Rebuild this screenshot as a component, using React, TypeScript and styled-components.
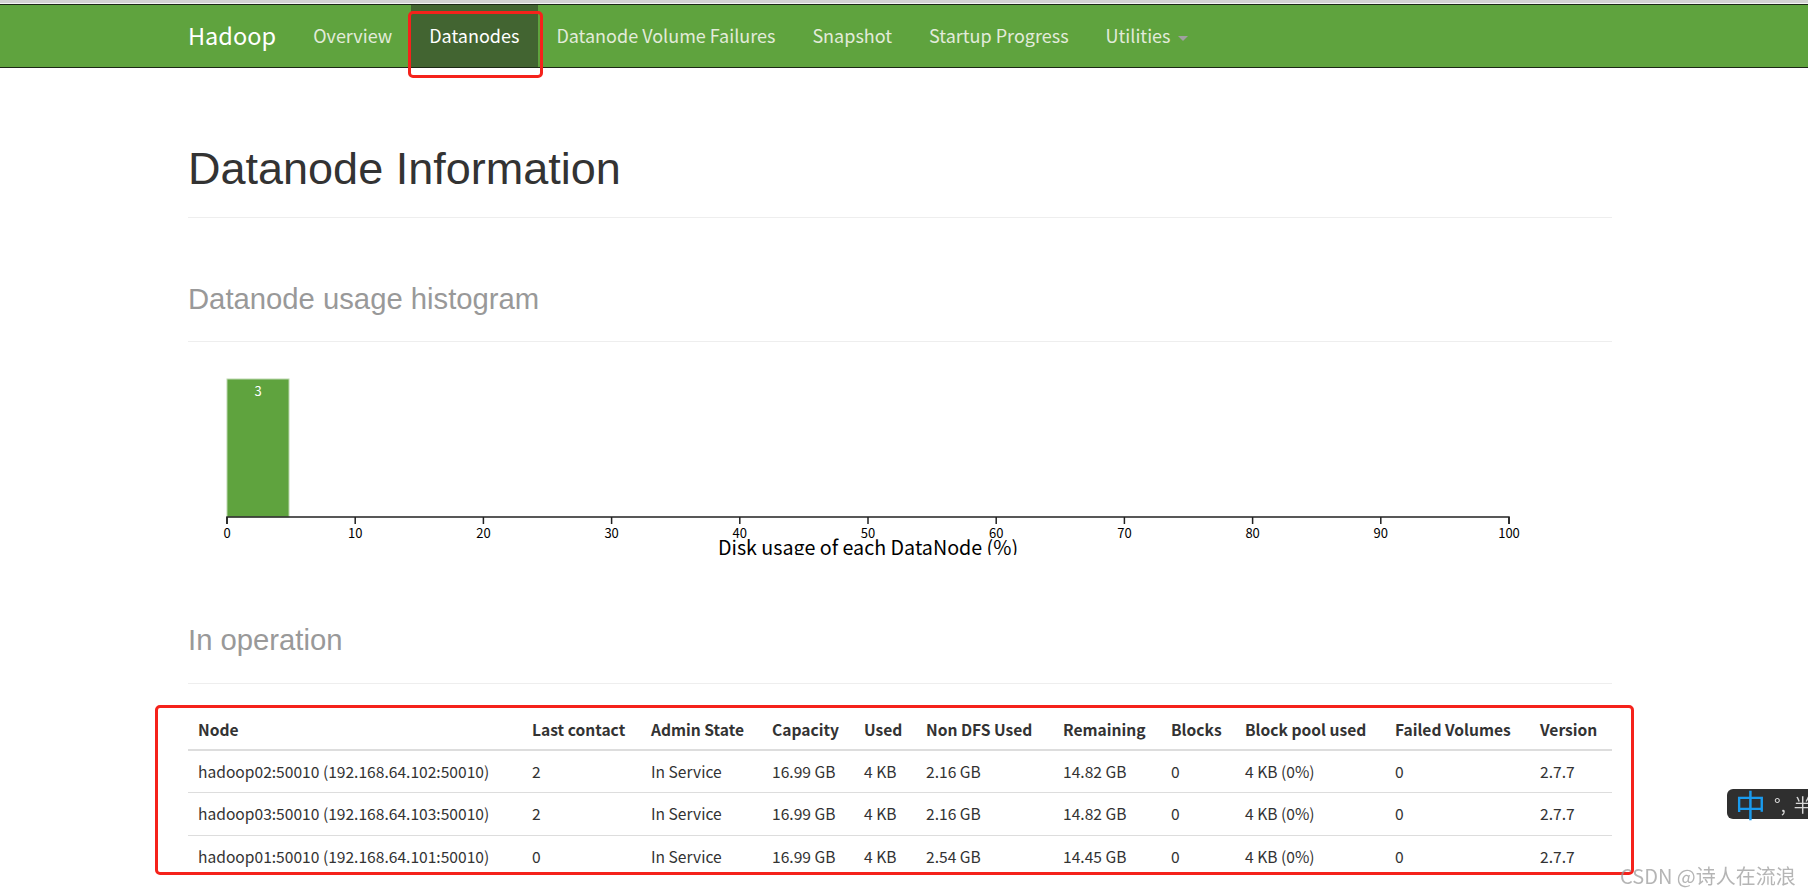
import React from "react";
import styled, { createGlobalStyle } from "styled-components";

const GlobalStyle = createGlobalStyle`
  html, body {
    margin: 0;
    padding: 0;
    overflow: hidden;
    background: #fff;
  }
  body {
    font-family: "Noto Sans CJK SC", "Noto Sans", sans-serif;
    color: #333;
  }
`;

const Page = styled.div`
  position: relative;
  width: 1808px;
  height: 893px;
  overflow: hidden;
`;

const TopStrip = styled.div`
  height: 3px;
  background: #d2d2d2;
  border-bottom: 1px solid #f4f4f4;
`;

const Navbar = styled.nav`
  height: 62px;
  background: #5fa33e;
  border-top: 1px solid #1c2816;
  border-bottom: 1px solid #1c2816;
`;

const Container = styled.div`
  width: 1424px;
  margin-left: 188px;
`;

const NavRow = styled.ul`
  display: flex;
  height: 62px;
  margin: 0;
  padding: 0;
  list-style: none;
`;

const Brand = styled.li`
  padding-right: 18.75px;
  line-height: 61px;
  font-size: 23.5px;
  color: #fff;
`;

const NavItem = styled.li<{ $active?: boolean }>`
  position: relative;
  padding: 0 18.5px;
  line-height: 61px;
  font-size: 18px;
  color: ${(p) => (p.$active ? "#fff" : "#e2ebda")};
  background: ${(p) => (p.$active ? "#426431" : "transparent")};
`;

const Caret = styled.span`
  display: inline-block;
  width: 0;
  height: 0;
  margin-left: 7px;
  vertical-align: middle;
  border-top: 5px solid #a0a0a0;
  border-left: 5px solid transparent;
  border-right: 5px solid transparent;
`;

const Marker = styled.span<{ $t: number; $r: number; $b: number; $l: number }>`
  position: absolute;
  top: ${(p) => p.$t}px;
  right: ${(p) => p.$r}px;
  bottom: ${(p) => p.$b}px;
  left: ${(p) => p.$l}px;
  border: 3px solid #f5221b;
  border-radius: 5px;
  pointer-events: none;
  z-index: 5;
`;

const PageHeader = styled.div<{ $top: number; $pad: number }>`
  margin-top: ${(p) => p.$top}px;
  padding-bottom: ${(p) => p.$pad}px;
  border-bottom: 1px solid #eee;
`;

const Title = styled.h1`
  margin: 0;
  font-family: "Liberation Sans", Arial, sans-serif;
  font-weight: 400;
  font-size: 45px;
  line-height: 49.5px;
  color: #333;
`;

const SubTitle = styled.h1`
  margin: 0;
  font-family: "Liberation Sans", Arial, sans-serif;
  font-weight: 400;
  font-size: 29.25px;
  line-height: 32.2px;
  color: #999;
`;

const Chart = styled.svg`
  display: block;
  margin-top: 25px;
  font-family: "Noto Sans CJK SC", "Noto Sans", sans-serif;
`;

const TableWrap = styled.div`
  position: relative;
  margin-top: 25px;
`;

const Table = styled.table`
  width: 1424px;
  table-layout: fixed;
  border-collapse: collapse;
  font-size: 15.6px;
  color: #333;
`;

const Th = styled.th`
  padding: 10px;
  line-height: 20px;
  text-align: left;
  font-weight: 700;
  white-space: nowrap;
  border-bottom: 2.5px solid #ddd;
`;

const Td = styled.td`
  padding: 10px;
  line-height: 21.5px;
  white-space: nowrap;
  border-top: 1.25px solid #ddd;
`;

const Ime = styled.div`
  position: fixed;
  left: 1727px;
  top: 789px;
  width: 110px;
  height: 30px;
  display: flex;
  align-items: center;
  gap: 8px;
  padding-left: 8px;
  box-sizing: border-box;
  background: #2f2f2f;
  border-radius: 6px;
  font-family: "Noto Sans CJK SC", sans-serif;
  color: #d8d8d8;
  z-index: 6;
`;

const ImeMain = styled.span`
  font-size: 31px;
  line-height: 30px;
  color: #1a9bee;
`;

const ImeSym = styled.span`
  font-size: 18px;
  line-height: 30px;
`;

const Watermark = styled.div`
  position: fixed;
  left: 1620px;
  top: 861px;
  font-family: "Noto Sans CJK SC", sans-serif;
  font-size: 20px;
  color: rgba(150, 150, 150, 0.7);
  z-index: 6;
`;

const navItems = [
  "Overview",
  "Datanodes",
  "Datanode Volume Failures",
  "Snapshot",
  "Startup Progress",
];

const columns: [string, number][] = [
  ["Node", 334],
  ["Last contact", 119],
  ["Admin State", 121],
  ["Capacity", 92],
  ["Used", 62],
  ["Non DFS Used", 137],
  ["Remaining", 108],
  ["Blocks", 74],
  ["Block pool used", 150],
  ["Failed Volumes", 145],
  ["Version", 82],
];

const rows = [
  ["hadoop02:50010 (192.168.64.102:50010)", "2", "In Service", "16.99 GB", "4 KB", "2.16 GB", "14.82 GB", "0", "4 KB (0%)", "0", "2.7.7"],
  ["hadoop03:50010 (192.168.64.103:50010)", "2", "In Service", "16.99 GB", "4 KB", "2.16 GB", "14.82 GB", "0", "4 KB (0%)", "0", "2.7.7"],
  ["hadoop01:50010 (192.168.64.101:50010)", "0", "In Service", "16.99 GB", "4 KB", "2.54 GB", "14.45 GB", "0", "4 KB (0%)", "0", "2.7.7"],
];

// histogram geometry (px inside the svg)
const X0 = 39;
const UNIT = 12.82;
const AXIS_Y = 150;
const ticks = [0, 10, 20, 30, 40, 50, 60, 70, 80, 90, 100];

const Histogram = () => (
  <Chart width={1424} height={188}>
    <rect x={X0} y={12} width={62} height={AXIS_Y - 12} fill="#5fa33e" stroke="#bcd7ad" strokeWidth={1} />
    <text x={X0 + 31} y={28.5} fill="#fff" fontSize={13} textAnchor="middle">3</text>
    <path
      d={`M${X0},${AXIS_Y + 7}V${AXIS_Y}H${X0 + UNIT * 100}V${AXIS_Y + 7}`}
      fill="none"
      stroke="#222"
      strokeWidth={1.5}
    />
    {ticks.map((t) => (
      <g key={t}>
        <line x1={X0 + UNIT * t} x2={X0 + UNIT * t} y1={AXIS_Y} y2={AXIS_Y + 7} stroke="#222" strokeWidth={1.5} />
        <text x={X0 + UNIT * t} y={170.5} fontSize={13} textAnchor="middle" fill="#000">
          {t}
        </text>
      </g>
    ))}
    <text x={X0 + UNIT * 50} y={187.5} fontSize={19.7} textAnchor="middle" fill="#000">
      Disk usage of each DataNode (%)
    </text>
  </Chart>
);

export default function App() {
  return (
    <Page>
      <GlobalStyle />
      <TopStrip />
      <Navbar>
        <Container>
          <NavRow>
            <Brand>Hadoop</Brand>
            {navItems.map((n) => (
              <NavItem key={n} $active={n === "Datanodes"}>
                {n}
                {n === "Datanodes" && <Marker $t={6} $r={-5} $b={-11} $l={-3} />}
              </NavItem>
            ))}
            <NavItem>
              Utilities
              <Caret />
            </NavItem>
          </NavRow>
        </Container>
      </Navbar>

      <Container>
        <PageHeader $top={76} $pad={23.5}>
          <Title>Datanode Information</Title>
        </PageHeader>

        <PageHeader $top={64.7} $pad={26.1}>
          <SubTitle>Datanode usage histogram</SubTitle>
        </PageHeader>

        <Histogram />

        <PageHeader $top={68.7} $pad={27.1}>
          <SubTitle>In operation</SubTitle>
        </PageHeader>

        <TableWrap>
          <Table>
            <colgroup>
              {columns.map(([c, w]) => (
                <col key={c} style={{ width: w }} />
              ))}
            </colgroup>
            <thead>
              <tr>
                {columns.map(([c]) => (
                  <Th key={c}>{c}</Th>
                ))}
              </tr>
            </thead>
            <tbody>
              {rows.map((r) => (
                <tr key={r[0]}>
                  {r.map((v, i) => (
                    <Td key={i}>{v}</Td>
                  ))}
                </tr>
              ))}
            </tbody>
          </Table>
          <Marker $t={-4} $r={-22} $b={2} $l={-33} />
        </TableWrap>
      </Container>

      <Ime>
        <ImeMain>中</ImeMain>
        <ImeSym>°,</ImeSym>
        <ImeSym>半</ImeSym>
      </Ime>
      <Watermark>CSDN @诗人在流浪</Watermark>
    </Page>
  );
}
